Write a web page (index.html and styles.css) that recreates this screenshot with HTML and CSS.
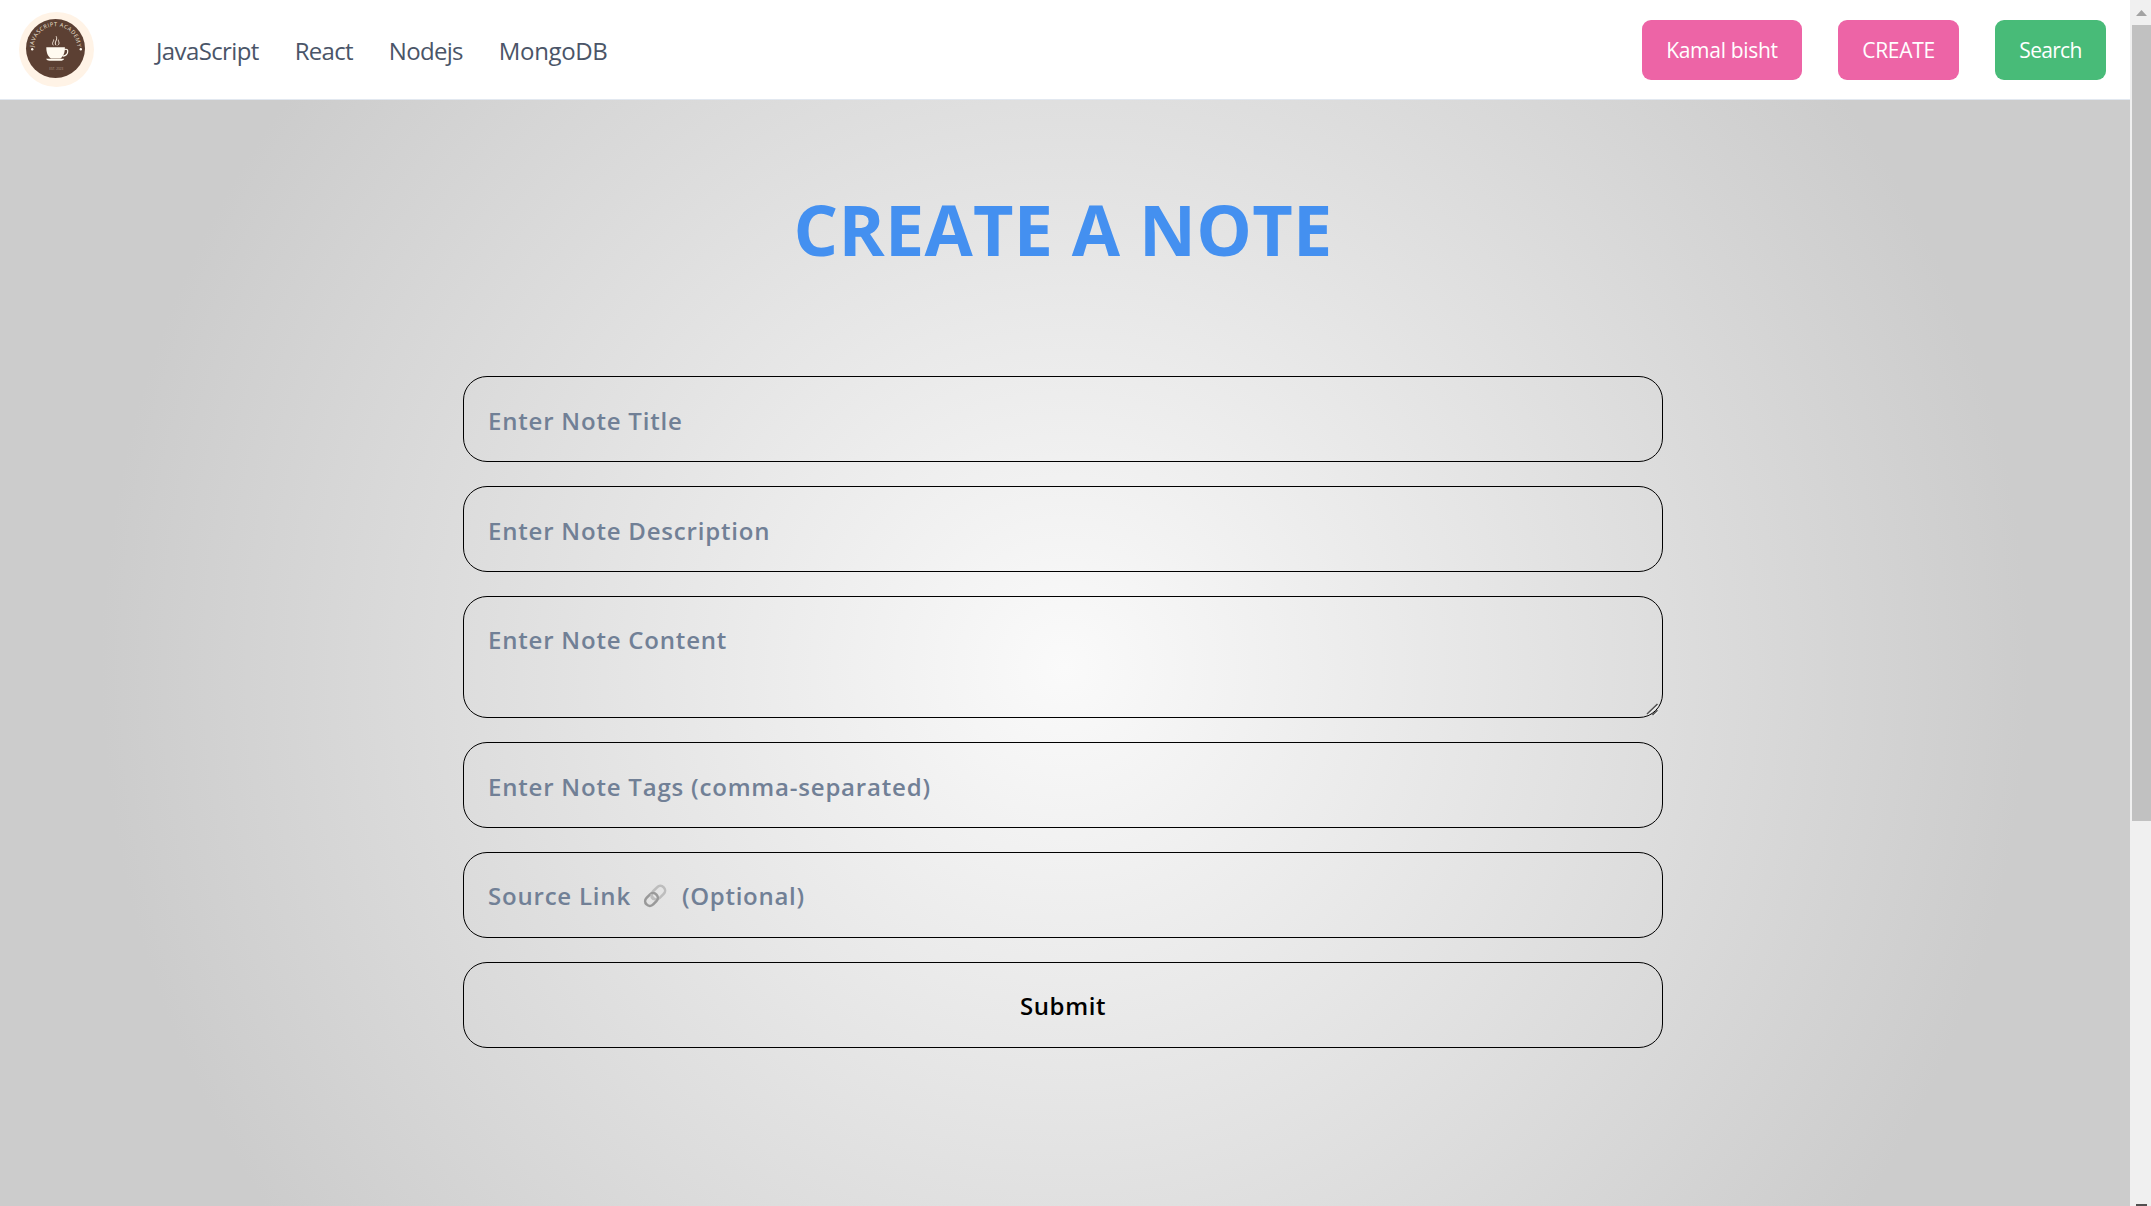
FILE: index.html
```html
<!DOCTYPE html>
<html lang="en">
<head>
<meta charset="utf-8">
<title>Create a note</title>
<link rel="stylesheet" href="styles.css">
</head>
<body>
<div class="page">
  <header class="nav">
    <svg class="logo" viewBox="0 0 75 75" aria-label="JavaScript Academy">
      <circle cx="37.5" cy="37.5" r="37.5" fill="#fff3e6"/>
      <circle cx="36.5" cy="36.5" r="29.5" fill="#5c4033"/>
      <path id="ring" d="M14.700 36A21.800 21.800 0 0 1 58.300 36" fill="none"/>
      <text class="logo-ring"><textPath href="#ring" startOffset="1" textLength="66">JAVASCRIPT ACADEMY</textPath></text>
      <circle cx="13.2" cy="37.3" r="1.2" fill="#fffaf0"/>
      <circle cx="61.8" cy="37.3" r="1.2" fill="#fffaf0"/>
      <path d="M27.3 35.2h18.6c0 6-1.8 9.300-4.500 11.300h-9.400c-2.900-2-4.700-5.300-4.700-11.300z" fill="#fffaf0"/>
      <path d="M27 46.800h18.200c-.7 1.400-2 2-3.800 2h-10.600c-1.900 0-3.100-.7-3.800-2z" fill="#fffaf0"/>
      <path d="M45.300 37.600c2.300-.9 3.700.1 3.400 2.200-.3 2.300-2.200 3.800-4.800 4.300" fill="none" stroke="#fffaf0" stroke-width="1.200"/>
      <path d="M34.400 33.300c-2.300-2.500.8-3.700.2-5.800M37 33.300c-2.400-3.500 2.100-5 .2-9M38.800 33.300c2.500-2 .3-3.700.6-5.600" fill="none" stroke="#f3e6d8" stroke-width="1"/>
      <text class="logo-est" x="30.300" y="57.500" textLength="14">EST. 2023</text>
    </svg>
    <nav class="links">
      <a>JavaScript</a>
      <a>React</a>
      <a>Nodejs</a>
      <a>MongoDB</a>
    </nav>
    <div class="actions">
      <button class="btn btn-user">Kamal bisht</button>
      <button class="btn btn-create">CREATE</button>
      <button class="btn btn-search">Search</button>
    </div>
  </header>
  <main class="main">
    <h1 class="title">CREATE A NOTE</h1>
    <form class="form">
      <input class="field" type="text" placeholder="Enter Note Title">
      <input class="field" type="text" placeholder="Enter Note Description">
      <div class="area-wrap">
        <textarea class="field area" placeholder="Enter Note Content"></textarea>
        <svg class="grip" viewBox="0 0 15 15" fill="none">
          <path d="M2 12.500L12 3.500M7.500 13.500L12 9.500" stroke="#f2f2f2" stroke-width="1.500"/>
          <path d="M1 12L11.500 2M6.500 13L11.500 8.300" stroke="#505050" stroke-width="1.500"/>
        </svg>
      </div>
      <input class="field" type="text" placeholder="Enter Note Tags (comma-separated)">
      <div class="field link-field">
        <span>Source Link</span>
        <svg class="link-icon" viewBox="0 0 24 24" fill="none">
          <rect x="-7.500" y="-4.700" width="15" height="9.400" rx="4.700" transform="translate(15.400 8.600) rotate(-45)" stroke="#bdbdbd" stroke-width="2.600"/>
          <rect x="-7" y="-4.700" width="14" height="9.400" rx="4.700" transform="translate(8.500 15.500) rotate(-45)" stroke="#999" stroke-width="2.600"/>
          <path d="M8.500 10v3.500q1 2 3.500 2" stroke="#bdbdbd" stroke-width="2"/>
        </svg>
        <span class="optional">(Optional)</span>
      </div>
      <button class="field submit" type="button">Submit</button>
    </form>
  </main>
</div>
<div class="scrollbar">
  <svg class="arrow" viewBox="0 0 11 6"><path d="M0 6L5.500 0 11 6z" fill="#a3a3a3"/></svg>
  <div class="thumb"></div>
  <div class="arrow-down"></div>
</div>
</body>
</html>
```
FILE: styles.css
```css
* { box-sizing: border-box; }

body {
  margin: 0;
  height: 1206px;
  overflow: hidden;
  display: flex;
  font-family: "Open Sans", "Noto Sans", sans-serif;
  background: #fff;
}

.page { flex: 1; min-width: 0; display: flex; flex-direction: column; }

.nav {
  flex: none;
  height: 100px;
  padding: 0 24px 0 19px;
  display: flex;
  align-items: center;
  border-bottom: 1px solid #e2e8f0;
  background: #fff;
}

.logo { width: 75px; height: 75px; flex: none; }
.logo-ring { font-size: 5.5px; fill: #f3e6d8; }
.logo-est { font-size: 3px; fill: #b39c8a; }

.links {
  display: flex;
  gap: 36px;
  margin-left: 62px;
  padding-top: 2px;
  font-size: 24px;
  line-height: 36px;
  letter-spacing: -0.7px;
  color: #4a5568;
}
.links a:first-child { letter-spacing: -0.62px; }
.links a:last-child { letter-spacing: -0.35px; }

.actions { display: flex; gap: 36px; margin-left: auto; }

.btn {
  height: 60px;
  padding: 0;
  border: 0;
  border-radius: 9px;
  font: 21px/32px "Open Sans", "Noto Sans", sans-serif;
  letter-spacing: -0.3px;
  color: #fff;
  background: #ed64a6;
}
.btn-user { width: 160px; }
.btn-create { width: 121px; }
.btn-search { width: 111px; letter-spacing: -0.7px; background: #48bb78; }

.main {
  flex: none;
  height: 1130px;
  padding: 93px 4px 0 0;
  display: flex;
  flex-direction: column;
  align-items: center;
  background: radial-gradient(circle 964px at 1065px 567px, #fafafa, #ccc);
}

.title {
  margin: 0;
  font-size: 70px;
  line-height: 72px;
  font-weight: 700;
  letter-spacing: 0.3px;
  color: #4490f0;
}

.form {
  width: 1200px;
  margin-top: 111px;
  display: flex;
  flex-direction: column;
  gap: 24px;
}

.field {
  display: block;
  width: 100%;
  height: 86px;
  margin: 0;
  padding: 25px 24px 23px;
  border: 1px solid #000;
  border-radius: 24px;
  outline: 0;
  background: transparent;
  font: 600 24px/36px "Open Sans", "Noto Sans", sans-serif;
  letter-spacing: 0.8px;
  color: #718096;
}
.field::placeholder { color: #718096; opacity: 1; }

.area-wrap { position: relative; }
.area { height: 122px; overflow: hidden; resize: none; }
.grip { position: absolute; right: 2px; bottom: 1px; width: 15px; height: 15px; }

.link-field { display: flex; align-items: center; }
.link-icon { width: 24px; height: 24px; margin: 0 15px 0 12px; }
.optional { letter-spacing: 0.7px; }

.submit { color: #000; letter-spacing: 0.6px; }

.scrollbar {
  flex: none;
  width: 21px;
  padding: 10px 0 0 2px;
  display: flex;
  flex-direction: column;
  align-items: center;
  background: #f0f0f0;
}
.arrow { width: 11px; height: 6px; }
.thumb { width: 100%; height: 796px; margin-top: 9px; background: #c1c1c1; }
.arrow-down { width: 11px; height: 2px; margin-top: auto; background: #505050; }
```
